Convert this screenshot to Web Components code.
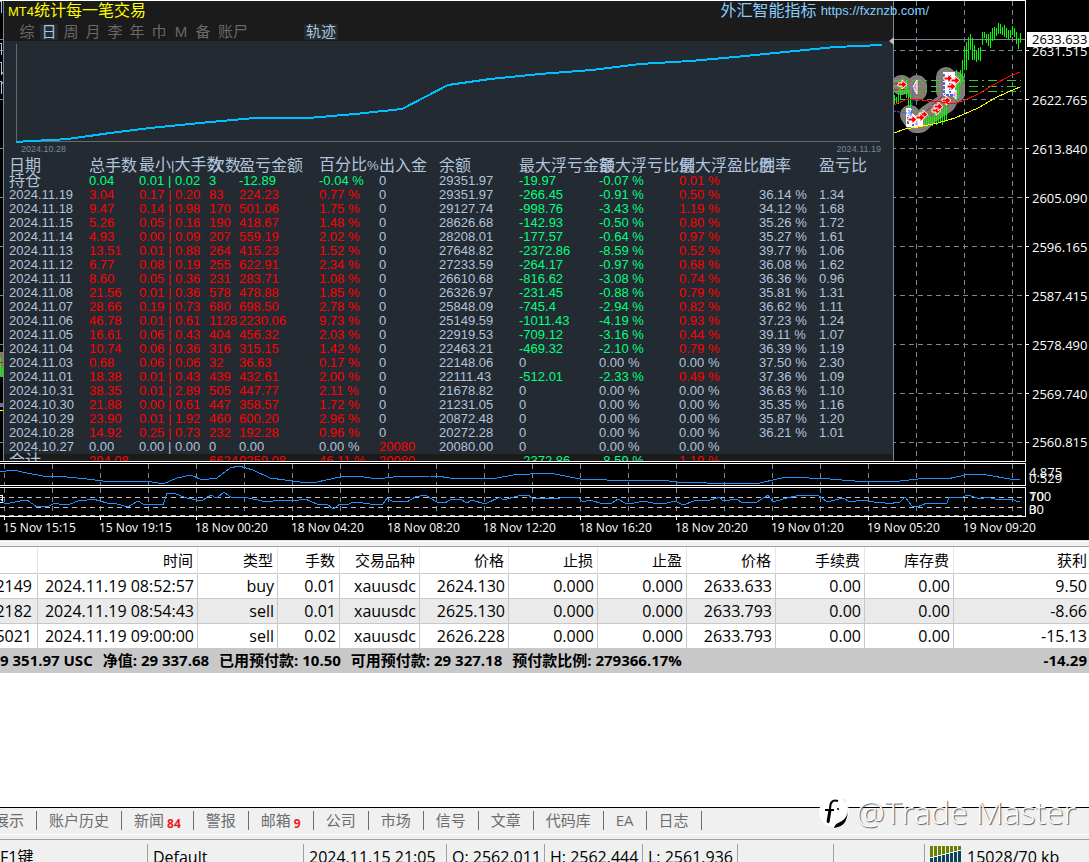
<!DOCTYPE html>
<html lang="zh-CN">
<head>
<meta charset="utf-8">
<title>MT4</title>
<style>
html, body { margin: 0; height: 100%; }
body { background: #fff; font-family: "Open Sans", "Noto Sans CJK SC", sans-serif; overflow: hidden; }
</style>
</head>
<body>
<terminal-app></terminal-app>
<script>
const define = (name, html) => customElements.define(name, class extends HTMLElement {
  constructor() {
    super();
    const t = document.createElement('template');
    t.innerHTML = typeof html === 'function' ? html() : html;
    this.attachShadow({ mode: 'open' }).appendChild(t.content.cloneNode(true));
  }
});

/* Converts points, in thirds of a pixel from an origin, to polyline points */
const pts = (ox, oy, list) => list.map(([x, y]) => `${Math.round(ox + x / 3)},${Math.round(oy + y / 3)}`).join(' ');
const vGrid = h => { let d = ''; for (let x = 4; x < 2400; x += 48) d += `M${x}.5 0V${h}`; return d; };

/* ---------- Price chart behind the statistics panel ---------- */
const bars = [[27,255,285],[33,262,282],[39,250,284],[45,225,270],[51,200,255],[57,215,250],[63,210,265],[69,240,290],[75,255,320],[105,300,335],[111,310,348],[117,312,345],[123,320,350],[129,315,345],[135,318,345],[141,320,348],[147,300,340],[153,305,345],[159,310,340],[165,305,335],[171,290,345],[177,290,335],[183,285,330],[209,200,260],[215,180,270],[221,195,262],[227,180,225],[233,150,215],[239,115,180],[245,95,180],[251,82,150],[257,72,120],[263,85,150],[269,105,150],[275,122,155],[281,115,150],[287,110,152],[293,67,105],[299,67,85],[305,72,100],[311,72,108],[317,65,112],[323,55,95],[329,52,92],[335,55,80],[341,38,70],[347,42,72],[353,50,75],[359,45,80],[365,55,85],[371,60,88],[377,60,85],[383,48,75],[389,55,82],[395,65,102],[401,85,118],[407,70,100]];
const arrow = (x, y) => `<path d="M${x} ${y - 1}h4v-3l5 4.500-5 4.500v-3h-4z" fill="#f00" stroke="#fff"/>`;
define('price-chart', () => {
  let hg = '';
  for (let y = 50; y < 460; y += 49) hg += `M0 ${y - 1}.5H3000`;
  const halo = 'M901 84h1M917 84v6M946 76v14M955 80v12M910 114l6 8h4l8-8 18-12 4-8';
  return `<style>
:host { display: block; background: #000; }
svg { display: block; width: 100%; height: 100%; }
</style>
<svg aria-hidden="true">
<g shape-rendering="crispEdges">
<path d="${vGrid(460)}" stroke="#778899" stroke-dasharray="5 4" fill="none"/>
<path d="${hg}" stroke="#778899" stroke-dasharray="5 4" fill="none"/>
</g>
<g fill="none" stroke-linecap="round" stroke-linejoin="round">
<path d="${halo}" stroke="#778899" stroke-width="20"/>
<path d="${halo}" stroke="#8b7768" stroke-width="18"/>
<path d="${halo}" stroke="#778899" stroke-width="13"/>
<path d="${halo}" stroke="#8b7768" stroke-width="11"/>
</g>
<g shape-rendering="crispEdges">
<path d="M893 79.500H1021M893 85.500H1021M893 90.500H1021" stroke="#32cd32" stroke-dasharray="9 4 2 4" fill="none"/>
<path d="M893 38.500H3000" stroke="#778899"/>
${bars.map(b => `<rect x="${Math.floor(885 + b[0] / 3)}" y="${Math.round(9 + b[1] / 3)}" width="1" height="${Math.round((b[2] - b[1]) / 3)}" fill="#0f0"/>`).join('')}
</g>
<path d="M906 107h6v5l5 4h6v10h-17zM943 71h12v24h-12z" fill="#fff"/>
<path d="M917 79l-4 7 4 7zM956 89l-4 5 4 4zM918 118l-4 5 4 3z" fill="#ee82ee" stroke="#fff"/>
<g stroke="#4169e1" fill="none" stroke-dasharray="3 1">
<path d="M893 110l13 2M911 116l2-30M916 118l30-26M904 112h7m-3-3l4 3-4 3" stroke-width="1"/>
<path d="M944 73v20M950 74v18M946 94h8" stroke-width="2"/>
<path d="M908 116v8M913 119v6" stroke-width="2"/>
</g>
${arrow(898, 83)}${arrow(944, 77)}${arrow(951, 79)}${arrow(947, 85)}${arrow(942, 99)}${arrow(932, 109)}${arrow(934, 105)}${arrow(919, 113)}${arrow(908, 118)}${arrow(916, 116)}
<path d="M893 88.500h12M893 82.500h6M921 115l24-22" stroke="#f00" stroke-dasharray="5 3"/>
<g fill="none" shape-rendering="crispEdges">
<polyline points="${pts(885, 9, [[27,285],[60,270],[90,268],[130,272],[170,275],[200,282],[235,272],[280,252],[330,222],[370,200],[405,186]])}" stroke="#f00"/>
<polyline points="${pts(885, 9, [[27,370],[60,358],[100,352],[160,340],[210,325],[280,295],[330,265],[370,247],[405,232]])}" stroke="#ff0"/>
</g>
<g shape-rendering="crispEdges">
<path d="M0 .5h1.500v11M0 42.500h1.500v11M0 61.500h1.500v12M0 80.500h1.500v12" stroke="#b0c4de" fill="none"/>
<path d="M0 38.500h3M0 98.500h3M0 147.500h3" stroke="#778899"/>
<rect y="351" width="3" height="55" fill="#8b7768"/><path d="M.5 357v18M2.500 366v11" stroke="#0f0"/><path d="M0 361.500h3M0 379.500h3" stroke="#f00"/><rect y="376" width="3" height="26"/><path d="M0 403.500h3" stroke="#4169e1"/><path d="M0 409.500h3" stroke="#ff0"/>
<path d="M2.500 71v2M2.500 81v2" stroke="#f80"/>
</g>
</svg>`;
});

/* ---------- Statistics panel ---------- */
const rows = `持仓|0.04|0.01 ! 0.02|3|-12.89|-0.04 %|0|29351.97|-19.97|-0.07 %|0.01 %||
2024.11.19|3.04|0.17 ! 0.20|83|224.23|0.77 %|0|29351.97|-266.45|-0.91 %|0.50 %|36.14 %|1.34
2024.11.18|9.47|0.14 ! 0.98|170|501.06|1.75 %|0|29127.74|-998.76|-3.43 %|1.19 %|34.12 %|1.68
2024.11.15|5.26|0.05 ! 0.16|190|418.67|1.48 %|0|28626.68|-142.93|-0.50 %|0.80 %|35.26 %|1.72
2024.11.14|4.93|0.00 ! 0.09|207|559.19|2.02 %|0|28208.01|-177.57|-0.64 %|0.97 %|35.27 %|1.61
2024.11.13|13.51|0.01 ! 0.88|264|415.23|1.52 %|0|27648.82|-2372.86|-8.59 %|0.52 %|39.77 %|1.06
2024.11.12|6.77|0.08 ! 0.19|255|622.91|2.34 %|0|27233.59|-264.17|-0.97 %|0.68 %|36.08 %|1.62
2024.11.11|8.60|0.05 ! 0.36|231|283.71|1.08 %|0|26610.68|-816.62|-3.08 %|0.74 %|36.36 %|0.96
2024.11.08|21.56|0.01 ! 0.36|578|478.88|1.85 %|0|26326.97|-231.45|-0.88 %|0.79 %|35.81 %|1.31
2024.11.07|28.66|0.19 ! 0.73|680|698.50|2.78 %|0|25848.09|-745.4|-2.94 %|0.82 %|36.62 %|1.11
2024.11.06|46.78|0.01 ! 0.61|1128|2230.06|9.73 %|0|25149.59|-1011.43|-4.19 %|0.93 %|37.23 %|1.24
2024.11.05|16.61|0.06 ! 0.43|404|456.32|2.03 %|0|22919.53|-709.12|-3.16 %|0.44 %|39.11 %|1.07
2024.11.04|10.74|0.06 ! 0.36|316|315.15|1.42 %|0|22463.21|-469.32|-2.10 %|0.79 %|36.39 %|1.19
2024.11.03|0.68|0.06 ! 0.06|32|36.63|0.17 %|0|22148.06|0|0.00 %|0.00 %|37.50 %|2.30
2024.11.01|18.38|0.01 ! 0.43|439|432.61|2.00 %|0|22111.43|-512.01|-2.33 %|0.49 %|37.36 %|1.09
2024.10.31|38.35|0.01 ! 2.89|505|447.77|2.11 %|0|21678.82|0|0.00 %|0.00 %|36.63 %|1.10
2024.10.30|21.88|0.00 ! 0.61|447|358.57|1.72 %|0|21231.05|0|0.00 %|0.00 %|35.35 %|1.16
2024.10.29|23.90|0.01 ! 1.92|460|600.20|2.96 %|0|20872.48|0|0.00 %|0.00 %|35.87 %|1.20
2024.10.28|14.92|0.25 ! 0.73|232|192.28|0.96 %|0|20272.28|0|0.00 %|0.00 %|36.21 %|1.01
2024.10.27|0.00|0.00 ! 0.00|0|0.00|0.00 %|20080|20080.00|0|0.00 %|0.00 %||
合计|294.08||6624|9259.08|46.11 %|20080||-2372.86|-8.59 %|1.19 %||`.split('\n').map(r => r.split('|'));
const cellClass = (r, i) => {
  const v = r[i];
  if (i === 0) return /^\d/.test(v) ? '' : 'cjk';
  if (i >= 1 && i <= 5) return r[0] === '持仓' ? 'down' : r[0] === '2024.10.27' ? '' : 'up';
  if (i === 6) return v === '20080' ? 'up' : '';
  if (i === 8 || i === 9) return v[0] === '-' ? 'down' : '';
  if (i === 10) return parseFloat(v) > 0 ? 'up' : '';
  return '';
};
const heads = ['日期','总手数','最小<small>|</small>大手数','次数','盈亏金额','百分比<small>%</small>','出入金','余额','最大浮亏金额','最大浮亏比例','最大浮盈比例','胜率','盈亏比'];
const widths = [85,50,70,30,80,60,60,80,80,80,80,60,0];
const tr = r => `<tr>${r.map((v, i) => `<td class="${cellClass(r, i)}">${v.replace('!', '|')}</td>`).join('')}</tr>`;
define('stats-table', () => `<style>
:host { display: block; }
table { table-layout: fixed; width: 100%; border-collapse: collapse; font: 13px/14px "Liberation Sans", "Noto Sans CJK SC", sans-serif; color: #b0c4de; }
th, td { padding: 0; height: 14px; text-align: left; font-weight: 400; white-space: nowrap; }
th { height: 16px; font-size: 16px; line-height: 16px; }
small { font-size: 13px; }
td:first-child, th:first-child { padding-left: 5px; }
.cjk { font-size: 16px; }
.up { color: #f00; }
.down { color: #00ff7f; }
tfoot { background: #1b1b1b; }
</style>
<table>
<colgroup>${widths.map(w => w ? `<col style="width:${w}px">` : '<col>').join('')}</colgroup>
<thead><tr>${heads.map(h => `<th scope="col">${h}</th>`).join('')}</tr></thead>
<tbody>${rows.slice(0, -1).map(tr).join('')}</tbody>
<tfoot>${tr(rows[rows.length - 1])}</tfoot>
</table>`);

define('equity-curve', `<style>
:host { display: block; color: #778899; font: 9px/10px "Liberation Sans", sans-serif; }
svg { display: block; width: 100%; height: 103px; }
div { display: flex; justify-content: space-between; padding: 0 12px 2px 17px; }
</style>
<svg viewBox="4 41 889 103" preserveAspectRatio="none" aria-hidden="true">
<path d="M16.500 44v97.500H880" fill="none" stroke="#696969"/>
<polyline points="16,142 30,141 53,140 68,139 110,133 150,128 200,123 255,118 308,118 355,114 402,109 448,85 490,79 540,74 592,70 640,64 690,61 735,57 785,52 835,47 882,45" fill="none" stroke="#00bfff" stroke-width="2" shape-rendering="crispEdges"/>
</svg>
<div><span>2024.10.28</span><span>2024.11.19</span></div>`);

define('stats-panel', `<style>
:host { display: flex; flex-direction: column; box-sizing: border-box; background: #242a31; border: solid #778899; border-width: 0 1px; font-family: "Liberation Sans", "Noto Sans CJK SC", sans-serif; color: #b0c4de; }
header { background: #1b1b1b; height: 40px; box-sizing: border-box; white-space: nowrap; }
.title { display: flex; justify-content: space-between; height: 19px; line-height: 19px; font-size: 16px; padding-left: 4px; }
h1 { margin: 0; font: inherit; color: #ff0; }
h1 span { font-size: 13px; }
.brand { display: flex; gap: 4px; margin-right: -36px; color: #87cefa; }
a { color: inherit; text-decoration: none; font-size: 13px; line-height: 20px; }
nav { display: flex; gap: 4px; padding: 4px 0 0 14px; }
button { border: 0; padding: 0; min-width: 18px; height: 16px; border-radius: 2px; background: none; color: #696969; font: 15px/16px "Liberation Sans", "Noto Sans CJK SC", sans-serif; }
.wide { min-width: 34px; }
.on { background: #242a31; color: #b0c4de; }
.trail { margin-left: 50px; }
.body { flex: 1; min-height: 0; overflow: hidden; }
stats-table { margin-top: 1px; }
.fold { position: absolute; top: 36px; right: -1px; display: block; }
</style>
<header>
<div class="title"><h1><span>MT4</span>统计每一笔交易</h1><div class="brand"><span>外汇智能指标</span><a href="https://fxznzb.com/">https://fxznzb.com/</a></div></div>
<nav><button>综</button><button class="on">日</button><button>周</button><button>月</button><button>李</button><button>年</button><button>巾</button><button>M</button><button>备</button><button class="wide">账尸</button><button class="wide on trail">轨迹</button></nav>
</header>
<div class="body"><equity-curve></equity-curve><stats-table></stats-table></div>
<svg class="fold" width="5" height="8" aria-hidden="true"><path d="M0 4l5-4v8z" fill="#c0c0c0"/></svg>`);

/* ---------- Axes ---------- */
define('price-axis', `<style>
:host { display: flex; flex-direction: column; position: relative; padding-top: 26px; font-size: 13px; color: #fff; }
div { flex: none; display: flex; align-items: center; height: 49px; }
div::before { content: ""; width: 3px; height: 1px; margin-right: 3px; background: #fff; }
div:last-of-type { height: 48px; }
output { position: absolute; top: 32px; left: 1px; right: 0; padding-left: 5px; line-height: 15px; background: #fff; color: #000; }
</style>
<div>2631.515</div><div>2622.765</div><div>2613.840</div><div>2605.090</div><div>2596.165</div><div>2587.415</div><div>2578.490</div><div>2569.740</div><div>2560.815</div>
<output>2633.633</output>`);

const ind1 = pts(0, 309 - 463, [[0,485],[40,481],[80,490],[130,497],[200,500],[260,506],[310,512],[440,514],[488,522],[530,504],[572,496],[606,509],[650,503],[690,475],[718,469],[760,480],[810,504],[900,516],[950,516],[1020,500],[1075,499],[1130,506],[1180,501],[1290,498]])
 + ' ' + pts(430, 309 - 463, [[20,498],[60,505],[200,504],[250,495],[300,493],[360,490],[450,506],[530,511],[690,511],[740,515],[830,520],[990,520],[1040,506],[1075,502],[1200,508],[1310,517]])
 + ' ' + pts(880, 379 - 463, [[0,303],[60,302],[140,293],[200,297],[270,283],[320,286],[390,297],[420,298]]);
const ind2 = pts(0, 309 - 487, [[0,567],[15,583],[60,573],[80,570],[110,590],[122,587],[140,590],[165,580],[190,584],[210,583],[235,574],[260,570],[280,568],[320,578],[350,582],[385,592],[415,574],[430,582],[490,584],[500,550],[520,550],[560,565],[605,572],[620,560],[635,555],[642,562],[655,562],[672,547],[695,565],[730,562],[760,567],[800,576],[820,572],[850,570],[880,573],[915,566],[950,582],[980,583],[998,598],[1020,582],[1040,584],[1060,576],[1090,580],[1130,584],[1150,582],[1160,565],[1175,573],[1220,575],[1245,560],[1275,555],[1310,575]])
 + ' ' + pts(430, 309 - 487, [[30,575],[45,578],[60,570],[90,568],[110,580],[125,570],[165,582],[210,562],[220,570],[265,557],[295,555],[305,565],[345,563],[370,568],[410,560],[445,560],[460,575],[480,570],[520,583],[545,580],[565,568],[585,580],[600,582],[640,572],[670,578],[700,582],[735,573],[760,585],[800,570],[830,572],[870,562],[880,572],[920,568],[935,580],[980,575],[1015,555],[1030,575],[1060,568],[1110,556],[1165,556],[1190,575],[1240,565],[1260,575],[1300,570]])
 + ' ' + pts(880, 379 - 487, [[0,370],[10,365],[20,372],[60,365],[75,352],[95,378],[110,380],[140,370],[170,373],[200,368],[208,352],[240,355],[265,345],[300,357],[320,350],[345,357],[400,357],[410,367],[420,363]]);
const indicator = (h, extra, line) => `<style>
:host { display: block; }
svg { display: block; width: 100%; height: 100%; }
</style><svg aria-hidden="true" fill="none" shape-rendering="crispEdges">
<path d="${vGrid(h)}" stroke="#778899" stroke-dasharray="5 4"/>${extra}
<polyline points="${line}" stroke="#1e90ff"/></svg>`;
define('volatility-chart', () => indicator(21, '', ind1));
define('oscillator-chart', () => indicator(28, '<path d="M0 9.500H3000M0 19.500H3000M0 27.500H3000" stroke="#c0c0c0" stroke-dasharray="5 4"/><path d="M0 7.500h2.500v7H0M0 11.500h2.500" stroke="#fff"/>', ind2));

define('scale-labels', `<style>
:host { display: block; position: relative; font-size: 13px; line-height: 12px; color: #fff; }
::slotted(span) { position: absolute; left: 3px; top: 3px; }
::slotted(.low) { top: auto; bottom: 2px; }
</style><slot></slot>`);

define('time-axis', () => `<style>
:host { display: flex; height: 23px; overflow: hidden; color: #fff; font-size: 12px; line-height: 21px; }
span { flex: none; width: 96px; padding-left: 3px; box-sizing: border-box; white-space: nowrap; background: linear-gradient(#fff, #fff) 4px 0 / 1px 3px no-repeat; }
</style>${['15 Nov 15:15','15 Nov 19:15','18 Nov 00:20','18 Nov 04:20','18 Nov 08:20','18 Nov 12:20','18 Nov 16:20','18 Nov 20:20','19 Nov 01:20','19 Nov 05:20','19 Nov 09:20'].map(t => `<span>${t}</span>`).join('')}`);

define('chart-workspace', `<style>
:host { display: grid; grid-template-columns: minmax(0, 1fr) 63px; grid-template-rows: 462px 23px 30px 22px; row-gap: 1px; background: #000; overflow: hidden; }
.pane { box-sizing: border-box; border: solid #fff; border-width: 1px 1px 1px 0; }
.main { display: grid; grid-template: minmax(0, 1fr) / minmax(0, 1fr); }
.main > * { grid-area: 1 / 1; }
stats-panel { width: 891px; margin-left: 3px; position: relative; }
time-axis { grid-column: 1 / -1; margin-top: -1px; }
</style>
<div class="pane main"><price-chart></price-chart><stats-panel></stats-panel></div>
<price-axis></price-axis>
<volatility-chart class="pane"></volatility-chart>
<scale-labels><span>4.875</span><span class="low">0.529</span></scale-labels>
<oscillator-chart class="pane"></oscillator-chart>
<scale-labels><span>100</span><span>70</span><span class="low">30</span><span class="low">0</span></scale-labels>
<time-axis></time-axis>`);

/* ---------- Open positions ---------- */
const cols = [38,160,80,62,80,89,89,89,89,89,89,0];
const trades = [
  ['2149','2024.11.19 08:52:57','buy','0.01','xauusdc','2624.130','0.000','0.000','2633.633','0.00','0.00','9.50'],
  ['2182','2024.11.19 08:54:43','sell','0.01','xauusdc','2625.130','0.000','0.000','2633.793','0.00','0.00','-8.66'],
  ['5021','2024.11.19 09:00:00','sell','0.02','xauusdc','2626.228','0.000','0.000','2633.793','0.00','0.00','-15.13']];
define('trade-table', () => `<style>
:host { display: block; border-top: 1px solid #a0a0a0; color: #000; }
table { width: 100%; table-layout: fixed; border-collapse: separate; border-spacing: 0; font-size: 16px; }
th, td { box-sizing: border-box; padding: 0 3px 0 0; text-align: right; font-weight: 400; white-space: nowrap; line-height: 24px; height: 25px; border: solid #c8c8c8; border-width: 0 1px 1px 0; }
th { height: 27px; line-height: 26px; font-size: 15px; padding-right: 4px; border-right-color: #e5e5e5; }
th:last-child, td:last-child { border-right: 0; padding-right: 2px; }
td div { display: flex; justify-content: flex-end; padding-right: 2px; overflow: hidden; }
tbody tr:nth-child(2) { background: #eaeaea; }
tbody tr:last-child td { border-bottom: 0; height: 24px; }
section { display: flex; justify-content: space-between; height: 25px; line-height: 25px; background: #c8c8c8; font-size: 15px; font-weight: 700; padding-right: 2px; white-space: nowrap; }
p { margin: 0; display: flex; gap: 10px; }
</style>
<table><colgroup>${cols.map(c => c ? `<col style="width:${c}px">` : '<col>').join('')}</colgroup>
<thead><tr>${['','时间','类型','手数','交易品种','价格','止损','止盈','价格','手续费','库存费','获利'].map(h => `<th scope="col">${h}</th>`).join('')}</tr></thead>
<tbody>${trades.map(r => `<tr>${r.map((v, i) => `<td>${i ? v : `<div>${v}</div>`}</td>`).join('')}</tr>`).join('')}</tbody></table>
<section><p><span>9 351.97 USC</span><span>净值: 29 337.68</span><span>已用预付款: 10.50</span><span>可用预付款: 29 327.18</span><span>预付款比例: 279366.17%</span></p><span>-14.29</span></section>`);

/* ---------- Bottom tabs and status bar ---------- */
define('terminal-tabs', () => `<style>
:host { display: flex; align-items: flex-start; height: 28px; box-sizing: border-box; padding-top: 3px; background: #f0f0f0; border-top: 1px solid #000; border-bottom: 1px solid #fff; overflow: hidden; }
button { flex: none; display: flex; gap: 3px; border: 0; border-right: 1px solid #6d6d6d; background: none; padding: 0 12px; height: 19px; color: #6d6d6d; font: 15px/18px "Open Sans", "Noto Sans CJK SC", sans-serif; white-space: nowrap; }
button:first-of-type { width: 37px; justify-content: flex-end; padding-left: 0; }
b { font-size: 12px; line-height: 25px; color: #ed1c24; }
</style>${['展示','账户历史','新闻<b>84</b>','警报','邮箱<b>9</b>','公司','市场','信号','文章','代码库','EA','日志'].map(t => `<button>${t}</button>`).join('')}`);

define('status-bar', () => `<style>
:host { display: grid; grid-template-columns: 147px 156px 143px 98px 98px 95px 96px 91px 1fr; box-sizing: border-box; height: 23px; padding-top: 4px; background: #f0f0f0; border-top: 1px solid #a0a0a0; color: #000; font-size: 16px; line-height: 26px; overflow: hidden; white-space: nowrap; }
span { padding-left: 5px; border-left: 1px solid #a0a0a0; height: 26px; }
span:first-of-type { padding: 0; border: 0; }
.net { display: flex; gap: 5px; }
svg { display: block; flex: none; margin-top: 2px; }
</style>
<span>F1键</span><span>Default</span><span>2024.11.15 21:05</span><span>O: 2562.011</span><span>H: 2562.444</span><span>L: 2561.936</span><span></span><span></span>
<span class="net"><svg width="32" height="16" aria-hidden="true" shape-rendering="crispEdges">${[0,1,2,3,4,5,6,7].map(i => `<rect x="${i * 4}" width="3" height="${11 - i}" fill="#668000"/><rect x="${i * 4}" y="${12 - i}" width="3" height="${4 + i}" fill="#0b4460"/>`).join('')}</svg>15028/70 kb</span>`);

define('water-mark', `<style>
:host { display: flex; align-items: center; gap: 6px; color: #fff; font: 300 32px/36px "Open Sans", sans-serif; text-shadow: 1px 1px 1px #555; white-space: nowrap; pointer-events: none; }
svg { display: block; }
</style>
<svg width="32" height="34" viewBox="0 0 32 34" aria-hidden="true">
<circle cx="16" cy="17" r="15" fill="#fff"/>
<path d="M25 3c6 7 7 18-1 23-4 2-7 3-8 7 6-1 10-3 12-8 3-7 2-17-3-22z"/>
<path d="M20 6c-6-2-8 2-8 8l-2 14M7 15h9" fill="none" stroke="#000" stroke-width="2"/>
<path d="M12 15l-2 12" stroke="#000" stroke-width="3"/><circle cx="20" cy="14" r="1"/>
</svg><span>@Trade Master</span>`);

define('terminal-app', `<style>
:host { display: flex; flex-direction: column; min-height: 100vh; position: relative; }
.split { height: 6px; box-sizing: border-box; background: #f0f0f0; border-top: 1px solid #e3e3e3; box-shadow: inset 0 1px #fff; }
.space { flex: 1; }
.gap { height: 4px; background: #f0f0f0; }
water-mark { position: absolute; right: 13px; bottom: 32px; }
</style>
<chart-workspace></chart-workspace>
<div class="split"></div>
<trade-table></trade-table>
<div class="space"></div>
<terminal-tabs></terminal-tabs>
<div class="gap"></div>
<status-bar></status-bar>
<water-mark></water-mark>`);
</script>
</body>
</html>
